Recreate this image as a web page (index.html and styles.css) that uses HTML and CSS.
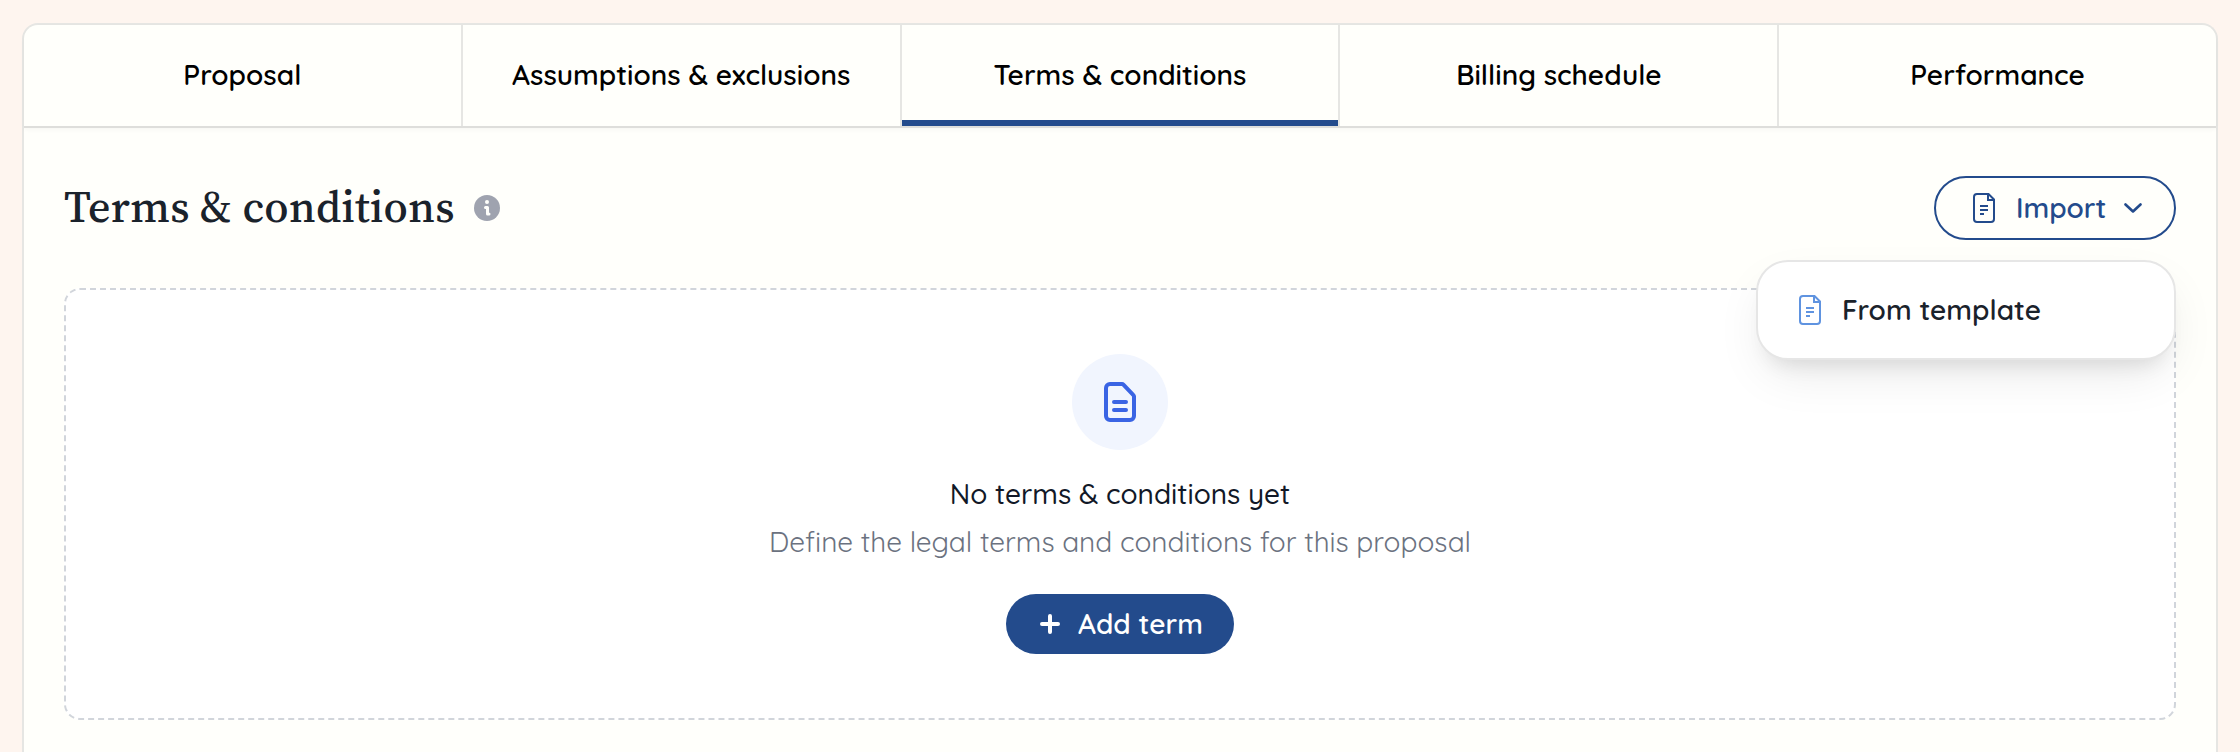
FILE: index.html
```html
<!DOCTYPE html>
<html lang="en">

<head>
    <meta charset="UTF-8">
    <title>Terms &amp; conditions</title>
    <link rel="stylesheet" href="styles.css">
</head>

<body>
    <div class="card">
        <div class="tabs">
            <div class="tab">Proposal</div>
            <div class="tab">Assumptions &amp; exclusions</div>
            <div class="tab active">Terms &amp; conditions</div>
            <div class="tab">Billing schedule</div>
            <div class="tab">Performance</div>
        </div>

        <div class="content">
            <div class="header">
                <h1 class="heading">Terms &amp; conditions</h1>
                <svg class="info" width="26" height="26" viewBox="0 0 26 26">
                    <circle cx="13" cy="13" r="13" fill="#9fa3af" />
                    <circle cx="13" cy="7" r="2" fill="#fffffb" />
                    <path d="M11.500 12.500h2v6.500h1.500" fill="none" stroke="#fffffb" stroke-width="3" stroke-linecap="round" stroke-linejoin="round" />
                </svg>
                <div class="import">
                    <button class="import-btn">
                        <svg class="doc" width="22" height="30" viewBox="0 0 22 30">
                            <path d="M15.5 1H4a3 3 0 0 0-3 3v22a3 3 0 0 0 3 3h14a3 3 0 0 0 3-3V6.5zM15 1v6h6M7 13h8M7 17h8M7 21h4" />
                        </svg>
                        <span class="import-text">Import</span>
                        <svg class="chevron" width="18" height="10" viewBox="0 0 18 10">
                            <path d="M1.5 1.5L9 8.5l7.5-7" />
                        </svg>
                    </button>
                    <div class="menu">
                        <svg class="doc" width="22" height="30" viewBox="0 0 22 30">
                            <path d="M15.5 1H4a3 3 0 0 0-3 3v22a3 3 0 0 0 3 3h14a3 3 0 0 0 3-3V6.5zM15 1v6h6M7 13h8M7 17h8M7 21h4" />
                        </svg>
                        <span class="menu-text">From template</span>
                    </div>
                </div>
            </div>

            <div class="empty">
                <div class="circle">
                    <svg width="32" height="40" viewBox="0 0 32 40">
                        <path d="M18 2H6a4 4 0 0 0-4 4v28a4 4 0 0 0 4 4h20a4 4 0 0 0 4-4V14.500a2 2 0 0 0-.6-1.400L19.400 2.600A2 2 0 0 0 18 2zM10 20h12M10 28h12" />
                    </svg>
                </div>
                <div class="empty-title">No terms &amp; conditions yet</div>
                <div class="empty-text">Define the legal terms and conditions for this proposal</div>
                <button class="add-btn">
                    <svg width="20" height="20" viewBox="0 0 20 20">
                        <path d="M10 2v16M2 10h16" />
                    </svg>
                    <span class="add-text">Add term</span>
                </button>
            </div>
        </div>
    </div>
</body>

</html>
```
FILE: styles.css
```css
* {
    padding: 0;
    margin: 0;
    box-sizing: border-box;
    font-family: Quicksand, Lato, sans-serif;
}

body {
    background-color: #fef5ef;
    padding: 23px 22px 0;
}

.card {
    height: 729px;
    border: 2px solid #e6e6e3;
    border-bottom: 0;
    border-radius: 16px 16px 0 0;
    background-color: #fffffb;
}

.tabs {
    display: flex;
    height: 103px;
    border-bottom: 2px solid #dededb;
    border-radius: 14px 14px 0 0;
    box-shadow: 0 2px 4px rgba(0, 0, 0, 0.03);
}

.tab {
    flex: 1;
    border-right: 2px solid #e6e6e3;
    font-size: 28px;
    line-height: 36px;
    font-weight: 600;
    text-align: center;
    padding-top: 32px;
    color: #000;
    white-space: nowrap;
}

.tab:last-child {
    border-right: 0;
}

.active {
    box-shadow: inset 0 -6px 0 #234b8c;
}

.content {
    padding: 48px 40px 0;
}

.header {
    display: flex;
    align-items: center;
    height: 64px;
    margin-bottom: 48px;
}

.heading {
    font-family: "Source Serif 4", "Source Serif Pro", "Liberation Serif", serif;
    font-variation-settings: "opsz" 14;
    font-size: 44px;
    line-height: 56px;
    letter-spacing: 0.28px;
    font-weight: 500;
    color: #1a222b;
    white-space: nowrap;
    padding-bottom: 2px;
}

.info {
    margin-left: 19px;
}

.import {
    position: relative;
    margin-left: auto;
}

.import-btn {
    display: flex;
    align-items: center;
    width: 242px;
    height: 64px;
    padding-left: 37px;
    border: 2px solid #234b8c;
    border-radius: 32px;
    background: none;
    color: #234b8c;
    font-size: 28px;
    font-weight: 600;
}

.doc {
    fill: none;
    stroke: currentColor;
    stroke-width: 2;
    flex-shrink: 0;
}

.import-text {
    width: 89px;
    margin-left: 21px;
    padding-bottom: 1px;
    text-align: left;
}

.chevron {
    margin-left: 19px;
    fill: none;
    stroke: currentColor;
    stroke-width: 2.6;
    stroke-linecap: round;
    stroke-linejoin: round;
}

.menu {
    position: absolute;
    top: 84px;
    right: 0;
    width: 420px;
    height: 100px;
    display: flex;
    align-items: center;
    padding-left: 41px;
    background-color: #fff;
    border: 2px solid #e6e6e6;
    border-radius: 32px;
    box-shadow: 0 20px 50px -10px rgba(0, 0, 0, 0.1), 0 16px 20px -12px rgba(0, 0, 0, 0.1);
    color: #5f93e0;
}

.menu-text {
    margin-left: 21px;
    padding-bottom: 1px;
    font-size: 28px;
    font-weight: 600;
    color: #1a222b;
}

.empty {
    height: 432px;
    display: flex;
    flex-direction: column;
    align-items: center;
    padding-top: 64px;
    border: 2px dashed #d1d5db;
    border-radius: 16px;
    background-color: #fff;
}

.circle {
    width: 96px;
    height: 96px;
    border-radius: 50%;
    background-color: #f1f5fe;
    display: flex;
    align-items: center;
    justify-content: center;
}

.circle svg {
    fill: none;
    stroke: #3a64e4;
    stroke-width: 4;
    stroke-linecap: round;
}

.empty-title {
    margin-top: 24px;
    font-size: 28px;
    line-height: 40px;
    font-weight: 500;
    color: #111827;
}

.empty-text {
    margin-top: 8px;
    font-size: 28px;
    line-height: 40px;
    color: #6b7280;
}

.add-btn {
    display: flex;
    align-items: center;
    width: 228px;
    height: 60px;
    margin-top: 32px;
    padding-left: 34px;
    border: 0;
    border-radius: 30px;
    background-color: #234b8c;
    color: #fff;
    font-size: 28px;
    font-weight: 600;
}

.add-btn svg {
    stroke: currentColor;
    stroke-width: 4;
    stroke-linecap: round;
}

.add-text {
    margin-left: 18px;
    padding-bottom: 1px;
}
```
